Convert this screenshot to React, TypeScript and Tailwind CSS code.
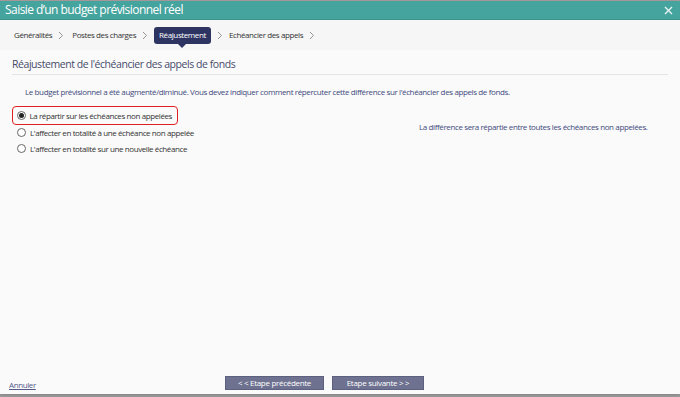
import React from "react";

const Chevron = () => (
  <svg width="6" height="9" viewBox="0 0 6 9" className="mx-[6px]">
    <path d="M1 1 L4.5 4.5 L1 8" fill="none" stroke="#8a8a8a" strokeWidth="0.9" />
  </svg>
);

const Radio = ({ checked }: { checked?: boolean }) => (
  <span className="inline-flex items-center justify-center w-[9px] h-[9px] rounded-full border border-[#666] bg-white mr-[4px] shrink-0">
    {checked && <span className="w-[5px] h-[5px] rounded-full bg-[#222]" />}
  </span>
);

export default function App() {
  return (
    <div
      className="w-[680px] h-[397px] bg-[#9a9a9a] flex flex-col overflow-hidden whitespace-nowrap"
      style={{ fontFamily: '"Open Sans", "Noto Sans", sans-serif' }}
    >
      <div className="h-[1px] bg-[#a89a9c]" />
      <div className="flex-1 flex flex-col bg-[#fafafa] mb-[3px] shadow">
        <div className="h-[19px] bg-[#46a49e] border-b border-[#3b918b] flex items-center justify-between pl-[5px] pr-[7px]">
          <span className="text-[12px] text-white tracking-[-0.55px] leading-none">Saisie d’un budget prévisionnel réel</span>
          <svg width="9" height="9" viewBox="0 0 9 9">
            <path d="M1 1 L8 8 M8 1 L1 8" stroke="#e8f4f3" strokeWidth="1.4" />
          </svg>
        </div>
        <div className="h-[30px] bg-[#f6f6f6] flex items-center pl-[14px] text-[8px] text-[#333] tracking-[-0.4px]">
          <span>Généralités</span>
          <Chevron />
          <span className="ml-[2px]">Postes des charges</span>
          <Chevron />
          <span className="relative bg-[#2d3462] text-white rounded-[3px] px-[5px] h-[17px] flex items-center">
            Réajustement
            <span className="absolute left-1/2 -translate-x-1/2 top-[17px] w-0 h-0 border-l-[4px] border-r-[4px] border-t-[4px] border-l-transparent border-r-transparent border-t-[#2d3462]" />
          </span>
          <Chevron />
          <span>Echéancier des appels</span>
          <Chevron />
        </div>
        <div className="flex-1 flex flex-col px-[12px]">
          <div className="mt-[8px] pb-[3px] border-b border-[#e4e4e4] text-[10.5px] text-[#464b6b] tracking-[-0.44px] leading-[13px]">
            Réajustement de l'échéancier des appels de fonds
          </div>
          <div className="mt-[11px] pl-[13px] text-[8px] leading-[11px] text-[#3f4a7d] tracking-[-0.38px]">
            Le budget prévisionnel a été augmenté/diminué. Vous devez indiquer comment répercuter cette différence sur l'échéancier des appels de fonds.
          </div>
          <div className="flex mt-[9px]">
            <div className="w-[407px] flex flex-col text-[8px] text-[#333] tracking-[-0.4px]">
              <div className="flex items-center w-[166px] h-[19px] border-[1.5px] border-[#e02020] rounded-[4px] pl-[3.5px]">
                <Radio checked />
                <span>La répartir sur les échéances non appelées</span>
              </div>
              <div className="flex items-center h-[15px] pl-[5px]">
                <Radio />
                <span>L'affecter en totalité à une échéance non appelée</span>
              </div>
              <div className="flex items-center h-[17px] pl-[5px]">
                <Radio />
                <span>L'affecter en totalité sur une nouvelle échéance</span>
              </div>
            </div>
            <div className="mt-[15px] text-[8px] leading-[11px] text-[#3f4a7d] tracking-[-0.38px]">
              La différence sera répartie entre toutes les échéances non appelées.
            </div>
          </div>
          <div className="flex-1" />
        </div>
        <div className="relative h-[22px] flex items-center">
          <a className="absolute left-[9px] top-[7px] text-[8px] text-[#545a8a] underline tracking-[-0.4px]">Annuler</a>
          <div className="flex gap-[8px] ml-[225px]">
            <button className="w-[99px] h-[14px] bg-[#6e7290] border border-[#5d6180] text-white text-[8px] leading-none tracking-[-0.3px]">
              &lt; &lt; Etape précédente
            </button>
            <button className="w-[92px] h-[14px] bg-[#6e7290] border border-[#5d6180] text-white text-[8px] leading-none tracking-[-0.3px]">
              Etape suivante &gt; &gt;
            </button>
          </div>
        </div>
      </div>
    </div>
  );
}
